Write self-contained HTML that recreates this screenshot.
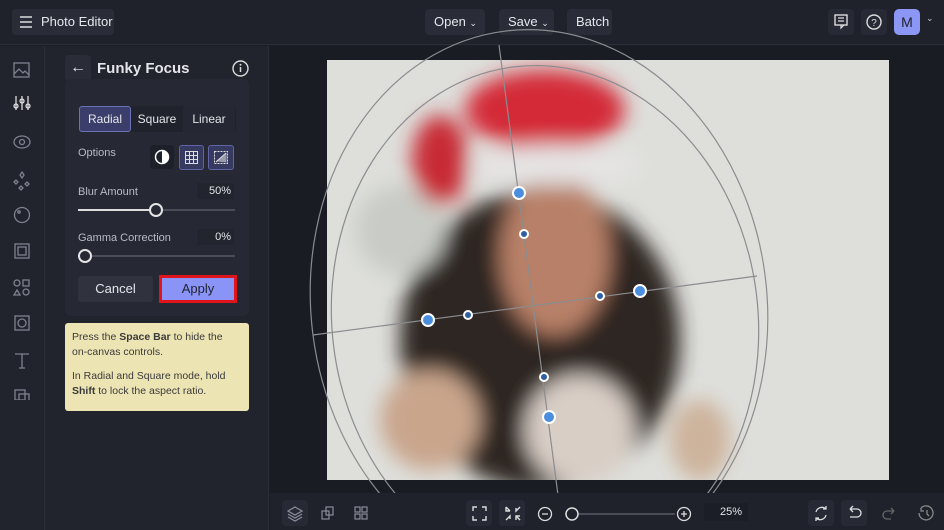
<!DOCTYPE html>
<html><head><meta charset="utf-8"><style>
*{box-sizing:border-box;margin:0;padding:0}
body{width:944px;height:530px;background:#1c1e27;font-family:"Liberation Sans",sans-serif;color:#e4e5ea;position:relative;overflow:hidden;font-size:13px}
.top{position:absolute;left:0;top:0;width:944px;height:45px;background:#1f212b;border-bottom:1px solid #2b2d38}
.btn{position:absolute;background:#2a2c38;border-radius:4px;height:26px;line-height:26px;font-size:13px;color:#e6e7ec;padding:0 9px;white-space:nowrap}
.side{position:absolute;left:0;top:46px;width:45px;height:484px;background:#21232d;border-right:1px solid #2b2d38}
.panel{position:absolute;left:45px;top:46px;width:224px;height:484px;background:#21232d;border-right:1px solid #2b2d38}
.card{position:absolute;left:20px;top:33px;width:184px;height:237px;background:#262834;border-radius:6px}
.canvas{position:absolute;left:270px;top:46px;width:674px;height:447px;background:#1a1c24}
.bottom{position:absolute;left:270px;top:493px;width:674px;height:37px;background:#1f212b}
.ib{position:absolute;width:26px;height:26px;border-radius:4px;background:#272935}
svg{position:absolute}
</style></head><body>
<div class="top">
 <div class="btn" style="left:12px;top:9px;width:102px;padding-left:29px;padding-right:0">Photo Editor</div>
 <svg style="left:19px;top:15px" width="14" height="14"><path d="M1 2h12M1 7h12M1 12h12" stroke="#ddd" stroke-width="1.5"/></svg>
 <div class="btn" style="left:425px;top:9px;width:60px">Open <span style="font-size:9px">⌄</span></div>
 <div class="btn" style="left:499px;top:9px;width:55px">Save <span style="font-size:9px">⌄</span></div>
 <div class="btn" style="left:567px;top:9px;width:45px">Batch</div>
 <div class="ib" style="left:828px;top:9px"></div>
 <svg style="left:834px;top:14px" width="14" height="16"><rect x="1" y="1" width="12" height="10" fill="none" stroke="#ddd" stroke-width="1.4"/><path d="M4 4h6M4 7h6M7 11l0 3 3-3" stroke="#ddd" stroke-width="1.2" fill="none"/></svg>
 <div class="ib" style="left:861px;top:9px"></div>
 <svg style="left:866px;top:14px" width="16" height="16"><circle cx="8" cy="8" r="7" fill="none" stroke="#ddd" stroke-width="1.4"/><text x="8" y="12" font-size="10" text-anchor="middle" fill="#ddd" font-family="Liberation Sans">?</text></svg>
 <div style="position:absolute;left:894px;top:9px;width:26px;height:26px;border-radius:5px;background:#8b96f5;color:#1f212b;text-align:center;line-height:26px;font-size:14px">M</div>
 <div style="position:absolute;left:926px;top:13px;font-size:9px;color:#ccc">⌄</div>
</div>
<div class="side">
 <svg style="left:12px;top:14px" width="20" height="340" fill="none" stroke="#7e8190" stroke-width="1.3">
  <rect x="2" y="3" width="15" height="14"/><path d="M2 14l5-5 4 4 2-2 4 4"/>
  <path d="M4 36v14M10 36v14M16 36v14" stroke="#ddd"/><circle cx="4" cy="46" r="2" stroke="#ddd"/><circle cx="10" cy="41" r="2" stroke="#ddd"/><circle cx="16" cy="46" r="2" stroke="#ddd"/>
  <ellipse cx="10" cy="82" rx="8" ry="6"/><circle cx="10" cy="82" r="2.5"/>
  <path d="M10 112l2 3-2 3-2-3zM4 120l2 2-2 2-2-2zM15 122l2 2-2 2-2-2zM9 126l2 2-2 2-2-2z"/>
  <circle cx="10" cy="155" r="7.5"/><circle cx="7" cy="152" r="1.2"/>
  <rect x="3" y="184" width="14" height="14"/><rect x="6" y="187" width="8" height="8"/>
  <circle cx="5" cy="223" r="3"/><rect x="11" y="220" width="6" height="6"/><path d="M2 235l3-5 3 5z"/><circle cx="14" cy="232" r="3"/>
  <rect x="3" y="256" width="14" height="14"/><circle cx="10" cy="263" r="4"/>
  <path d="M3 294h14M10 294v14M7 308h6"/>
  <rect x="3" y="330" width="10" height="10"/><rect x="7" y="334" width="10" height="10"/>
 </svg>
</div>
<div class="panel">
 <div style="position:absolute;left:20px;top:9px;width:26px;height:26px;background:#2a2c38;border-radius:4px;text-align:center;line-height:25px;font-size:16px">←</div>
 <div style="position:absolute;left:52px;top:14px;font-size:15px;font-weight:bold">Funky Focus</div>
 <svg style="left:187px;top:14px" width="17" height="17"><circle cx="8.5" cy="8.5" r="7.5" fill="none" stroke="#ddd" stroke-width="1.4"/><path d="M8.5 7v5" stroke="#ddd" stroke-width="1.5"/><circle cx="8.5" cy="4.8" r="1" fill="#ddd"/></svg>
 <div class="card">
  <div style="position:absolute;left:14px;top:27px;width:157px;height:26px;background:#20222c;border-radius:3px"></div>
  <div style="position:absolute;left:14px;top:27px;width:52px;height:26px;background:#3b3e6a;border:1px solid #6c72b8;border-radius:3px;text-align:center;line-height:24px;font-size:12px">Radial</div>
  <div style="position:absolute;left:67px;top:27px;width:50px;text-align:center;line-height:26px;font-size:12px">Square</div>
  <div style="position:absolute;left:118px;top:27px;width:52px;text-align:center;line-height:26px;font-size:12px;background:#252732">Linear</div>
  <div style="position:absolute;left:13px;top:68px;font-size:11px;color:#b8bac4">Options</div>
  <div style="position:absolute;left:85px;top:66px;width:24px;height:24px;background:#1e2029;border-radius:3px"></div>
  <svg style="left:89px;top:70px" width="16" height="16"><circle cx="8" cy="8" r="6.5" fill="none" stroke="#fff" stroke-width="1.5"/><path d="M8 1.5a6.5 6.5 0 0 1 0 13z" fill="#fff"/></svg>
  <div style="position:absolute;left:114px;top:66px;width:25px;height:25px;background:#363960;border:1px solid #5e64a6;border-radius:3px"></div>
  <svg style="left:120px;top:72px" width="13" height="13" fill="none" stroke="#ddd"><rect x=".5" y=".5" width="12" height="12"/><path d="M4.5 0v13M8.5 0v13M0 4.5h13M0 8.5h13"/></svg>
  <div style="position:absolute;left:143px;top:66px;width:26px;height:25px;background:#363960;border:1px solid #5e64a6;border-radius:3px"></div>
  <svg style="left:149px;top:72px" width="14" height="13" fill="none" stroke="#ddd"><rect x=".5" y=".5" width="13" height="12" stroke-dasharray="2 1"/><path d="M2 11l10-9" /><path d="M3 10l9-7v8z" fill="#ddd" opacity=".6"/></svg>
  <div style="position:absolute;left:13px;top:107px;font-size:11px;color:#b8bac4">Blur Amount</div>
  <div style="position:absolute;left:132px;top:104px;width:37px;height:16px;background:#22242e;text-align:right;font-size:11px;line-height:16px;padding-right:3px">50%</div>
  <div style="position:absolute;left:13px;top:130px;width:157px;height:2px;background:#4a4c58"></div>
  <div style="position:absolute;left:13px;top:130px;width:78px;height:2px;background:#ddd"></div>
  <div style="position:absolute;left:84px;top:124px;width:14px;height:14px;border-radius:50%;border:2px solid #e5e5e5;background:#262834"></div>
  <div style="position:absolute;left:13px;top:153px;font-size:11px;color:#b8bac4">Gamma Correction</div>
  <div style="position:absolute;left:132px;top:150px;width:37px;height:16px;background:#22242e;text-align:right;font-size:11px;line-height:16px;padding-right:3px">0%</div>
  <div style="position:absolute;left:13px;top:176px;width:157px;height:2px;background:#4a4c58"></div>
  <div style="position:absolute;left:13px;top:170px;width:14px;height:14px;border-radius:50%;border:2px solid #e5e5e5;background:#262834"></div>
  <div style="position:absolute;left:13px;top:197px;width:75px;height:26px;background:#30323e;border-radius:3px;text-align:center;line-height:26px;font-size:13px">Cancel</div>
  <div style="position:absolute;left:94px;top:196px;width:78px;height:28px;border:3px solid #e0141c;background:#8a94f6;color:#1f2130;text-align:center;line-height:22px;font-size:13px">Apply</div>
 </div>
 <div style="position:absolute;left:20px;top:277px;width:184px;height:88px;background:#ede4b4;border-radius:3px;color:#3a3a3a;font-size:10.5px;line-height:15px;padding:7px 22px 7px 7px">Press the <b>Space Bar</b> to hide the on-canvas controls.<div style="height:9px"></div>In Radial and Square mode, hold <b>Shift</b> to lock the aspect ratio.</div>
</div>
<div class="canvas"></div>
<svg style="left:0;top:0" width="944" height="530">
 <defs>
  <filter id="b" x="-20%" y="-20%" width="140%" height="140%"><feGaussianBlur stdDeviation="10"/></filter>
  <clipPath id="c"><rect x="327" y="60" width="562" height="420"/></clipPath>
 </defs>
 <g clip-path="url(#c)">
  <rect x="327" y="60" width="562" height="420" fill="#dedfdb"/>
  <g filter="url(#b)">
   <ellipse cx="540" cy="340" rx="140" ry="150" fill="#2e2624"/>
   <ellipse cx="400" cy="230" rx="45" ry="45" fill="#c9ccc6"/>
   <ellipse cx="555" cy="255" rx="55" ry="80" fill="#b88068"/>
   <ellipse cx="580" cy="430" rx="55" ry="55" fill="#d8cec6"/>
   <ellipse cx="430" cy="420" rx="50" ry="50" fill="#c9a58c"/>
   <ellipse cx="700" cy="440" rx="30" ry="40" fill="#cdb39c"/>
   <ellipse cx="545" cy="110" rx="80" ry="40" fill="#d42c38"/>
   <ellipse cx="440" cy="160" rx="28" ry="45" fill="#c82a36"/>
   <ellipse cx="555" cy="165" rx="85" ry="20" fill="#e6e4e4"/>
  </g>
 </g>
 <g fill="none" stroke="#8a8c90" stroke-width="1.2">
  <ellipse cx="545" cy="320" rx="213" ry="255" transform="rotate(-7 545 320)"/>
  <ellipse cx="539" cy="305" rx="228" ry="276" transform="rotate(-7 539 305)"/>
  <path d="M499 45L558 495M313 335L757 276"/>
 </g>
 <g stroke="#fff" stroke-width="2">
  <circle cx="519" cy="193" r="6" fill="#4a8ee0"/><circle cx="428" cy="320" r="6" fill="#4a8ee0"/><circle cx="640" cy="291" r="6" fill="#4a8ee0"/><circle cx="549" cy="417" r="6" fill="#4a8ee0"/>
  <circle cx="524" cy="234" r="4" fill="#2f5fa0"/><circle cx="468" cy="315" r="4" fill="#2f5fa0"/><circle cx="600" cy="296" r="4" fill="#2f5fa0"/><circle cx="544" cy="377" r="4" fill="#2f5fa0"/>
 </g>
</svg>
<div class="bottom">
 <div class="ib" style="left:12px;top:7px"></div><div class="ib" style="left:45px;top:7px;background:none"></div><div class="ib" style="left:78px;top:7px;background:none"></div>
 <svg style="left:17px;top:12px" width="90" height="17" fill="none" stroke="#8a8d9b" stroke-width="1.2">
  <path d="M8 2l7 4-7 4-7-4z"/><path d="M1 9l7 4 7-4M1 12l7 4 7-4"/>
  <rect x="35" y="6" width="7" height="8"/><rect x="39" y="2" width="7" height="8"/>
  <rect x="68" y="2" width="5" height="5"/><rect x="75" y="2" width="5" height="5"/><rect x="68" y="9" width="5" height="5"/><rect x="75" y="9" width="5" height="5"/>
 </svg>
 <div class="ib" style="left:196px;top:7px"></div><div class="ib" style="left:229px;top:7px"></div>
 <svg style="left:202px;top:13px" width="60" height="16" fill="none" stroke="#ddd" stroke-width="1.4">
  <path d="M1 5V1h4M10 1h4v4M14 10v4h-4M5 14H1v-4"/>
  <path d="M34 1v4h4M48 1l-4 4v-3M34 14l4-4v3M44 14v-4h4M38 5l-4-4M44 10l4 4"/>
 </svg>
 <svg style="left:267px;top:12px" width="160" height="18">
  <circle cx="8" cy="9" r="6.5" fill="none" stroke="#ddd" stroke-width="1.3"/><path d="M5 9h6" stroke="#ddd" stroke-width="1.3"/>
  <path d="M28 9h110" stroke="#4a4c58" stroke-width="2"/>
  <circle cx="35" cy="9" r="6" fill="#1f212b" stroke="#ddd" stroke-width="1.5"/>
  <circle cx="147" cy="9" r="6.5" fill="none" stroke="#ddd" stroke-width="1.3"/><path d="M144 9h6M147 6v6" stroke="#ddd" stroke-width="1.3"/>
 </svg>
 <div style="position:absolute;left:434px;top:10px;width:44px;height:18px;background:#1c1e27;text-align:right;font-size:11px;line-height:18px;padding-right:6px">25%</div>
 <div class="ib" style="left:538px;top:7px"></div><div class="ib" style="left:571px;top:7px"></div>
 <svg style="left:543px;top:12px" width="130" height="17" fill="none" stroke="#ddd" stroke-width="1.3">
  <path d="M3 7a6 6 0 0 1 10-3M13 10a6 6 0 0 1-10 3M13 1v3h-3M3 16v-3h3"/>
  <path d="M37 4h7a4 4 0 0 1 0 8h-7M37 4l3-3M37 4l3 3"/>
  <path d="M81 6h-7a4 4 0 0 0 0 8h4M81 6l-3-3M81 6l-3 3" stroke="#666"/>
  <path d="M108 3a7 7 0 1 1-2 5M108 3v3h3M114 5v4l2 2" stroke="#888"/>
 </svg>
</div>
</body></html>
